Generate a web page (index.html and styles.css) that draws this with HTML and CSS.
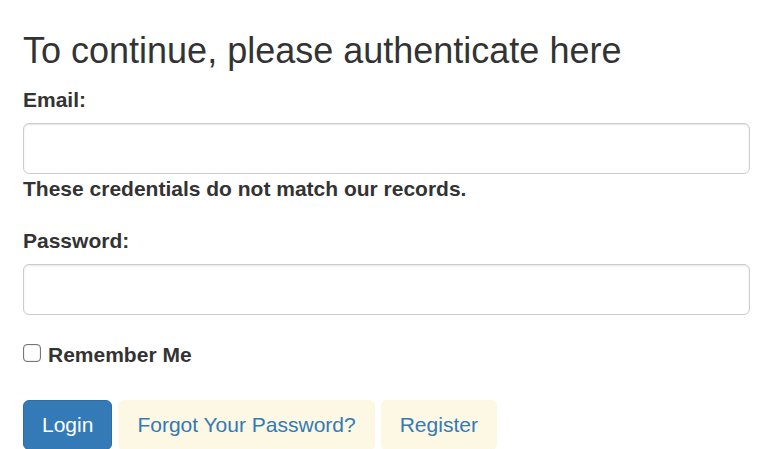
FILE: index.html
```html
<!DOCTYPE html>
<html lang="en">
<head>
<meta charset="utf-8">
<title>Login</title>
<link rel="stylesheet" href="styles.css">
</head>
<body>
<main class="login">
  <h1 class="title">To continue, please authenticate here</h1>
  <form>
    <div class="form-group">
      <label class="label" for="email">Email:</label>
      <input class="form-control" id="email" type="email" aria-describedby="email-error">
      <strong class="error" id="email-error">These credentials do not match our records.</strong>
    </div>
    <div class="form-group">
      <label class="label" for="password">Password:</label>
      <input class="form-control" id="password" type="password">
    </div>
    <div class="remember">
      <input class="checkbox" id="remember" type="checkbox">
      <label for="remember">Remember Me</label>
    </div>
    <div class="actions">
      <button class="btn btn-primary" type="submit">Login</button>
      <a class="btn btn-link" href="#">Forgot Your Password?</a>
      <a class="btn btn-link" href="#">Register</a>
    </div>
  </form>
</main>
</body>
</html>
```
FILE: styles.css
```css
* {
  box-sizing: border-box;
}

body {
  margin: 0;
  overflow: hidden;
  background: #fff;
  color: #333;
  font: 21px/30px "Liberation Sans", Arial, sans-serif;
}

.login {
  padding: 31px 23px 0;
}

.title {
  margin: 0 0 14px;
  font-size: 36px;
  font-weight: 400;
  line-height: 40px;
}

.form-group {
  margin-bottom: 22px;
}

.label {
  display: block;
  margin-bottom: 8px;
  font-weight: 700;
}

.form-control {
  display: block;
  width: 100%;
  height: 51px;
  padding: 9px 18px;
  border: 1px solid #ccc;
  border-radius: 6px;
  background: #fff;
  box-shadow: inset 0 1px 2px rgba(0, 0, 0, 0.1);
  color: #555;
  font: inherit;
}

.error {
  display: block;
}

.remember {
  display: flex;
  align-items: center;
  gap: 7px;
  padding-top: 3px;
  font-weight: 700;
}

.checkbox {
  width: 18px;
  height: 18px;
  margin: 0 0 4px;
  appearance: none;
  border: 1px solid #767676;
  border-radius: 4px;
  background: #fff;
  box-shadow: inset 0 0 1px #767676;
}

.checkbox:checked {
  background: #337ab7;
}

.actions {
  display: flex;
  gap: 6px;
  margin-top: 30px;
}

.btn {
  padding: 9px 18px;
  border: 1px solid transparent;
  border-radius: 6px;
  font: inherit;
  text-decoration: none;
  white-space: nowrap;
}

.btn-primary {
  border-color: #2e6da4;
  background: #337ab7;
  color: #fff;
}

.btn-link {
  background: #fcf8e3;
  color: #337ab7;
}
```
